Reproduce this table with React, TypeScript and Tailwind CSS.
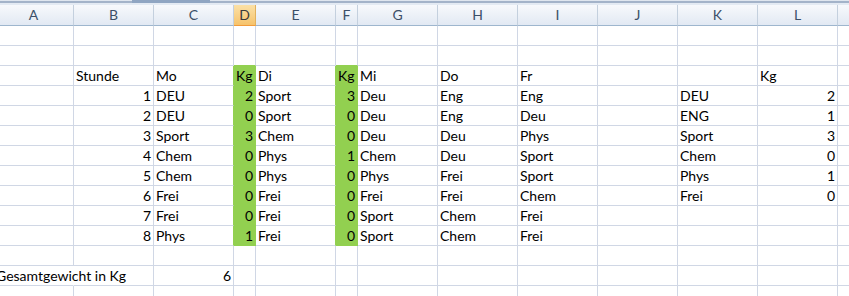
import React from "react";

type V = string | number | null;

// column widths A..M (including the 1px gridline on the right)
const COL_W = [
  "w-[80px]", "w-[80px]", "w-[80px]", "w-[22px]", "w-[80px]", "w-[22px]",
  "w-[80px]", "w-[80px]", "w-[80px]", "w-[80px]", "w-[80px]", "w-[80px]", "w-[80px]",
];
// column M is only a sliver at the right edge; its letter sits out of view
const LETTERS = ["A", "B", "C", "D", "E", "F", "G", "H", "I", "J", "K", "L", ""];

const E: V[] = Array(13).fill(null);

const ROWS: V[][] = [
  E,
  E,
  [null, "Stunde", "Mo", "Kg", "Di", "Kg", "Mi", "Do", "Fr", null, null, "Kg", null],
  [null, 1, "DEU", 2, "Sport", 3, "Deu", "Eng", "Eng", null, "DEU", 2, null],
  [null, 2, "DEU", 0, "Sport", 0, "Deu", "Eng", "Deu", null, "ENG", 1, null],
  [null, 3, "Sport", 3, "Chem", 0, "Deu", "Deu", "Phys", null, "Sport", 3, null],
  [null, 4, "Chem", 0, "Phys", 1, "Chem", "Deu", "Sport", null, "Chem", 0, null],
  [null, 5, "Chem", 0, "Phys", 0, "Phys", "Frei", "Sport", null, "Phys", 1, null],
  [null, 6, "Frei", 0, "Frei", 0, "Frei", "Frei", "Chem", null, "Frei", 0, null],
  [null, 7, "Frei", 0, "Frei", 0, "Sport", "Chem", "Frei", null, null, null, null],
  [null, 8, "Phys", 1, "Frei", 0, "Sport", "Chem", "Frei", null, null, null, null],
  E,
  ["Gesamtgewicht in Kg", null, 6, null, null, null, null, null, null, null, null, null, null],
  E,
];

const isGreen = (r: number, c: number) => r >= 2 && r <= 10 && (c === 3 || c === 5);

function Cell({ r, c, v }: { r: number; c: number; v: V }) {
  const g = isGreen(r, c);
  const rightGreen = g || isGreen(r, c + 1);
  const bottomGreen = g || isGreen(r + 1, c);
  // long label in column A spills over the gridline into B
  const spill = r === 12 && c === 0;
  const cls = [
    COL_W[c],
    "h-[20px] shrink-0 border-r border-b leading-[19px] whitespace-nowrap",
    g ? "bg-[#92d050]" : "",
    spill ? "border-r-transparent overflow-visible" : rightGreen ? "border-r-[#92d050]" : "border-r-[#d0d7e5]",
    bottomGreen ? "border-b-[#92d050]" : "border-b-[#d0d7e5]",
    typeof v === "number" ? "text-right pr-[2px]" : "text-left pl-[2px]",
    spill ? "pl-[1px]" : "overflow-hidden",
  ].join(" ");
  return <div className={cls}>{v ?? ""}</div>;
}

export default function App() {
  return (
    <div className="w-[849px] h-[296px] overflow-hidden bg-white font-['Lato','Open_Sans',sans-serif] text-[14px] text-black">
      {/* window frame strip above the column headers */}
      <div className="relative h-[5px] bg-[#e3eaf3] border-t border-t-[#dfe6ef]">
        <div className="h-[2px] bg-[#a3b3c9]" />
        <div className="absolute left-[132px] top-[-1px] w-[78px] h-[3px] bg-[#8fa5c2]" />
      </div>
      <div className="-ml-[6px]">
        {/* column headers */}
        <div className="flex">
          {LETTERS.map((l, c) => (
            <div
              key={c}
              className={[
                COL_W[c],
                "h-[21px] shrink-0 border-r border-b text-center leading-[20px] text-[14px]",
                c === 3
                  ? "bg-gradient-to-b from-[#fbe1a6] to-[#f6c36b] border-r-[#e1b15e] border-b-[#f29b3b] text-[#3b3b3b]"
                  : "bg-gradient-to-b from-[#f7f9fc] to-[#e2e9f3] border-r-[#c4d0de] border-b-[#9eb6ce] text-[#3c4f68]",
              ].join(" ")}
            >
              {l}
            </div>
          ))}
        </div>
        {ROWS.map((row, r) => (
          <div key={r} className="flex">
            {row.map((v, c) => (
              <Cell key={c} r={r} c={c} v={v} />
            ))}
          </div>
        ))}
      </div>
    </div>
  );
}
